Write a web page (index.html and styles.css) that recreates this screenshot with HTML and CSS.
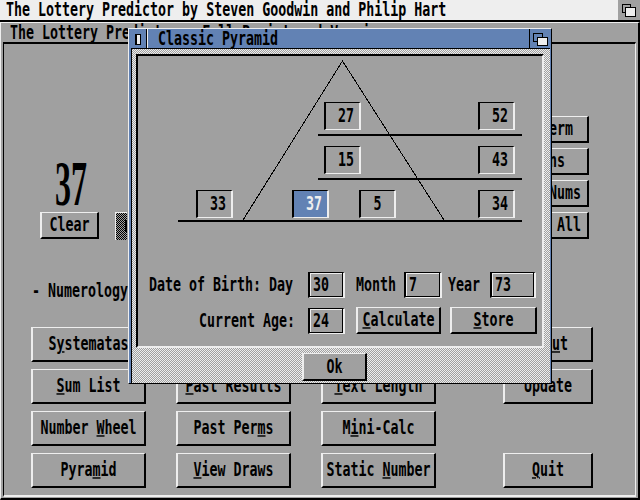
FILE: index.html
```html
<!DOCTYPE html>
<html>
<head>
<meta charset="utf-8">
<link rel="stylesheet" href="styles.css">
</head>
<body>
<div class="screen">
  <div class="screenbar">
    <div class="stitle"><span class="t">The Lottery Predictor by Steven Goodwin and Philip Hart</span></div>
    <div class="sdepth">
      <svg width="22" height="20" viewBox="0 0 22 20"><rect x="4.5" y="4.5" width="8" height="8" fill="#a0a0a0" stroke="#000"/><rect x="7.5" y="7.5" width="10" height="9" fill="#eeeeee" stroke="#000"/></svg>
    </div>
  </div>

  <div class="win main">
    <div class="wtitle"><span class="t">The Lottery Predictor - Full Registered Version</span></div>
    <div class="wbody">
      <div class="top">
        <div class="leftcol">
          <div class="bignum"><span>37</span></div>
          <div class="clearrow">
            <div class="btn clear"><span class="t">Clear</span></div>
            <div class="prop"><i></i></div>
          </div>
        </div>
        <div class="rightcol">
          <div class="btn"><span class="t">Do Perm</span></div>
          <div class="btn"><span class="t">Spins</span></div>
          <div class="btn"><span class="t">Save Nums</span></div>
          <div class="btn"><span class="t">Clear All</span></div>
        </div>
      </div>
      <div class="numer"><span class="t">- Numerology</span></div>
      <div class="grid">
        <div class="btn"><span class="t">S<u>y</u>stematas</span></div>
        <div class="btn"><span class="t">Frequency</span></div>
        <div class="btn"><span class="t">Hot Numbers</span></div>
        <div class="btn c4"><span class="t">Abo<u>u</u>t</span></div>

        <div class="btn"><span class="t"><u>S</u>um List</span></div>
        <div class="btn"><span class="t"><u>P</u>ast Results</span></div>
        <div class="btn"><span class="t"><u>T</u>ext Length</span></div>
        <div class="btn c4"><span class="t">Update</span></div>

        <div class="btn"><span class="t">Number <u>W</u>heel</span></div>
        <div class="btn"><span class="t">Past Per<u>m</u>s</span></div>
        <div class="btn"><span class="t">M<u>i</u>ni-Calc</span></div>
        <div></div>

        <div class="btn"><span class="t">Pyra<u>m</u>id</span></div>
        <div class="btn"><span class="t"><u>V</u>iew Draws</span></div>
        <div class="btn"><span class="t">Static <u>N</u>umber</span></div>
        <div class="btn c4"><span class="t"><u>Q</u>uit</span></div>
      </div>
    </div>
  </div>

  <div class="win dialog">
    <div class="dtitle">
      <div class="close"><i></i></div>
      <div class="dtext"><span class="t">Classic Pyramid</span></div>
      <div class="ddepth">
        <svg width="21" height="19" viewBox="0 0 21 19"><rect x="3.5" y="4.5" width="9" height="8" fill="#6282b4" stroke="#000"/><rect x="7.5" y="8.5" width="10" height="8" fill="#eeeeee" stroke="#000"/></svg>
      </div>
    </div>
    <div class="dbody">
      <div class="panel">
        <div class="pyr">
          <div class="prow r1">
            <div class="nbox two m6"><span class="t">27</span></div>
            <div class="nbox two m117"><span class="t">52</span></div>
          </div>
          <div class="prow r2">
            <div class="nbox two m6"><span class="t">15</span></div>
            <div class="nbox two m117"><span class="t">43</span></div>
          </div>
          <div class="prow r3">
            <div class="nbox two m18"><span class="t">33</span></div>
            <div class="nbox two sel m59"><span class="t">37</span></div>
            <div class="nbox m30"><span class="t">5</span></div>
            <div class="nbox two m82"><span class="t">34</span></div>
          </div>
          <svg class="tri" width="404" height="170" viewBox="0 0 404 170" shape-rendering="crispEdges"><polyline points="105,164 204.5,5 306,164" fill="none" stroke="#000" stroke-width="1"/></svg>
        </div>
        <div class="form">
          <div class="frow">
            <div class="lab"><span class="t">Date of Birth: Day</span></div>
            <div class="sbox w37"><span class="t">30</span></div>
            <div class="mlab"><span class="t">Month</span></div>
            <div class="sbox w38"><span class="t">7</span></div>
            <div class="ylab"><span class="t">Year</span></div>
            <div class="sbox w46"><span class="t">73</span></div>
          </div>
          <div class="frow">
            <div class="lab lab2"><span class="t">Current Age:</span></div>
            <div class="sbox w37"><span class="t">24</span></div>
            <div class="btn calc"><span class="t"><u>C</u>alculate</span></div>
            <div class="btn store"><span class="t"><u>S</u>tore</span></div>
          </div>
        </div>
      </div>
      <div class="btn ok"><span class="t">Ok</span></div>
    </div>
  </div>
</div>
</body>
</html>
```

FILE: styles.css
```css
:root {
  --g: #a0a0a0;
  --w: #eeeeee;
  --blue: #6282b4;
}
* { box-sizing: border-box; }
body {
  margin: 0;
  background: var(--g);
  font-family: "DejaVu Sans Mono", monospace;
  font-size: 13.3px;
  font-weight: bold;
  color: #000;
}
.screen {
  position: relative;
  width: 640px;
  height: 500px;
  overflow: hidden;
  background: var(--g);
}
.t {
  display: inline-block;
  transform: scaleY(1.45);
  line-height: 16px;
  white-space: pre;
}
u { text-decoration-thickness: 1px; text-underline-offset: 1px; }

/* screen title bar */
.screenbar {
  height: 22px;
  border-bottom: 2px solid #000;
  background: var(--w);
  display: flex;
}
.stitle {
  flex: 1;
  display: flex;
  align-items: center;
  padding-left: 6px;
}
.sdepth { width: 22px; height: 20px; background: var(--g); }
.sdepth svg { display: block; }

/* windows */
.win { position: absolute; background: var(--g); }
.main {
  left: 0;
  top: 22px;
  width: 640px;
  height: 478px;
  border-top: 1px solid var(--w);
  border-left: 1px solid var(--w);
  border-right: 2px solid #000;
  border-bottom: 2px solid #000;
  padding: 0 2px 1px 2px;
  display: flex;
  flex-direction: column;
}
.wtitle {
  height: 19px;
  display: flex;
  align-items: center;
  padding-left: 7px;
  white-space: nowrap;
  overflow: hidden;
}
.wbody {
  flex: 1;
  border-top: 2px solid #000;
  border-left: 1px solid #000;
  border-right: 1px solid var(--w);
  border-bottom: 2px solid var(--w);
}
.top {
  display: flex;
  justify-content: space-between;
  align-items: flex-start;
  padding: 72px 46px 0 36px;
}
.leftcol { margin-top: 45px; display: flex; flex-direction: column; }
.bignum {
  height: 45px;
  line-height: 45px;
  font-family: "Liberation Serif", serif;
  font-weight: bold;
  font-size: 64px;
  margin-left: 15px;
}
.bignum span {
  display: inline-block;
  transform: scaleX(0.5);
  transform-origin: left center;
}
.clearrow { margin-top: 6px; display: flex; align-items: flex-start; }
.clear { width: 59px; height: 27px; }
.prop {
  margin-left: 16px;
  width: 12px;
  height: 28px;
  border-left: 1px solid var(--w);
  border-top: 1px solid var(--w);
  background-image: conic-gradient(#000 0 25%, var(--g) 0 50%, #000 0 75%, var(--g) 0);
  background-size: 2px 2px;
}
.prop i { display: block; margin: 7px 0 0 9px; width: 2px; height: 12px; background: #000; }
.rightcol { display: flex; flex-direction: column; gap: 5px; }
.rightcol .btn { width: 88px; height: 27px; }

.numer {
  margin-top: 41px;
  height: 20px;
  display: flex;
  align-items: center;
  padding-left: 28px;
}
.grid {
  margin-top: 26px;
  margin-left: 27px;
  display: grid;
  grid-template-columns: 115px 115px 115px 127px;
  grid-auto-rows: 35px;
  column-gap: 30px;
  row-gap: 7px;
}
.grid .c4 { width: 90px; justify-self: end; }

.btn {
  background: var(--g);
  border-top: 1px solid var(--w);
  border-left: 2px solid var(--w);
  border-right: 2px solid #000;
  border-bottom: 2px solid #000;
  display: flex;
  align-items: center;
  justify-content: center;
  white-space: nowrap;
  overflow: hidden;
}

/* dialog */
.dialog {
  left: 128px;
  top: 28px;
  width: 424px;
  height: 356px;
  background: var(--blue);
  border-top: 1px solid var(--w);
  border-left: 1px solid var(--w);
  border-right: 1px solid #000;
  border-bottom: 1px solid #000;
  display: flex;
  flex-direction: column;
}
.dtitle { height: 19px; display: flex; }
.close {
  width: 18px;
  border-right: 1px solid #000;
  display: flex;
  align-items: center;
  justify-content: center;
}
.close i {
  display: block;
  width: 6px;
  height: 11px;
  border: 1px solid #000;
  border-left-width: 2px;
  background: var(--w);
  margin-top: 1px;
}
.dtext {
  flex: 1;
  padding-left: 10px;
  display: flex;
  align-items: center;
  border-left: 1px solid var(--w);
}
.ddepth { width: 22px; border-left: 1px solid #000; }
.ddepth svg { display: block; }
.dbody {
  flex: 1;
  margin: 0 1px 0 2px;
  border-left: 1px solid #000;
  border-top: 1px solid #000;
  background-image: conic-gradient(var(--w) 0 25%, var(--g) 0 50%, var(--w) 0 75%, var(--g) 0);
  background-size: 2px 2px;
  padding: 5px 0 0 4px;
}
.panel {
  width: 408px;
  height: 294px;
  border-top: 2px solid #000;
  border-left: 2px solid #000;
  border-right: 2px solid var(--w);
  border-bottom: 2px solid var(--w);
  background: var(--g);
}
.pyr { position: relative; display: flow-root; padding-top: 46px; }
.prow {
  display: flex;
  box-sizing: content-box;
  height: 28px;
  border-bottom: 2px solid #000;
}
.r1 { margin: 0 0 0 180px; width: 204px; padding-bottom: 4px; }
.r2 { margin: 10px 0 0 180px; width: 204px; padding-bottom: 4px; }
.r3 { margin: 10px 0 0 40px; width: 344px; padding-bottom: 2px; }
.nbox {
  width: 37px;
  height: 28px;
  border-top: 1px solid #000;
  border-left: 2px solid #000;
  border-right: 2px solid var(--w);
  border-bottom: 1px solid var(--w);
  display: flex;
  align-items: center;
  justify-content: center;
}
.nbox.two { padding-left: 7px; }
.nbox.sel { background: var(--blue); color: var(--w); }
.m6 { margin-left: 6px; }
.m117 { margin-left: 117px; }
.m18 { margin-left: 18px; }
.m59 { margin-left: 59px; }
.m30 { margin-left: 30px; }
.m82 { margin-left: 82px; }
.tri { position: absolute; left: 0; top: 0; pointer-events: none; }

.form { margin-top: 49px; }
.frow { display: flex; align-items: center; height: 27px; }
.frow + .frow { margin-top: 9px; }
.lab { width: 170px; text-align: right; padding-right: 15px; }
.lab2 { padding-right: 13px; }
.sbox {
  height: 26px;
  border-top: 1px solid #000;
  border-left: 2px solid #000;
  border-right: 2px solid var(--w);
  border-bottom: 1px solid var(--w);
  box-shadow: inset -1px -1px 0 #000, inset 1px 1px 0 var(--w);
  display: flex;
  align-items: center;
  padding-left: 3px;
}
.w37 { width: 37px; }
.w38 { width: 38px; }
.w46 { width: 46px; }
.mlab { margin-left: 11px; width: 48px; }
.ylab { margin-left: 6px; width: 42px; }
.calc { margin-left: 11px; width: 85px; height: 27px; }
.store { margin-left: 9px; width: 87px; height: 27px; }
.ok { margin: 5px 0 0 166px; width: 65px; height: 28px; }
```
